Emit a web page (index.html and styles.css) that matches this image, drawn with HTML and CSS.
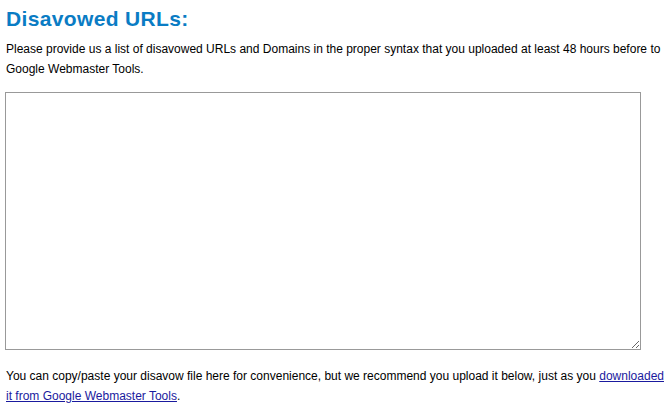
FILE: index.html
```html
<!DOCTYPE html>
<html>
<head>
<meta charset="utf-8">
<link rel="stylesheet" href="styles.css">
</head>
<body>
<div class="page">
  <h2 class="title">Disavowed URLs:</h2>
  <p class="intro">Please provide us a list of disavowed URLs and Domains in the proper syntax that you uploaded at least 48 hours before to Google Webmaster Tools.</p>
  <textarea class="box"></textarea>
  <p class="note">You can copy/paste your disavow file here for convenience, but we recommend you upload it below, just as you <a href="#" class="link">downloaded it from Google Webmaster Tools</a>.</p>
</div>
</body>
</html>
```
FILE: styles.css
```css
html, body {
  margin: 0;
  padding: 0;
  background: #fff;
}
.page {
  padding: 0 4px 0 6px;
  font-family: "Liberation Sans", Arial, sans-serif;
  font-size: 12px;
  color: #000;
  width: 660px;
}
.title {
  margin: 0;
  padding-top: 6px;
  font-size: 21px;
  line-height: 26px;
  font-weight: bold;
  letter-spacing: 0.35px;
  color: #0a7cc4;
}
.intro {
  margin: 7px 0 0 0;
  line-height: 20px;
}
.box {
  display: block;
  box-sizing: border-box;
  margin: 13px 0 0 -1px;
  width: 636px;
  height: 258px;
  border: 1px solid #999;
  resize: both;
  padding: 2px;
}
.note {
  margin: 16px 0 0 0;
  line-height: 20px;
}
.link {
  color: #1a1a9e;
  text-decoration: underline;
}
```
